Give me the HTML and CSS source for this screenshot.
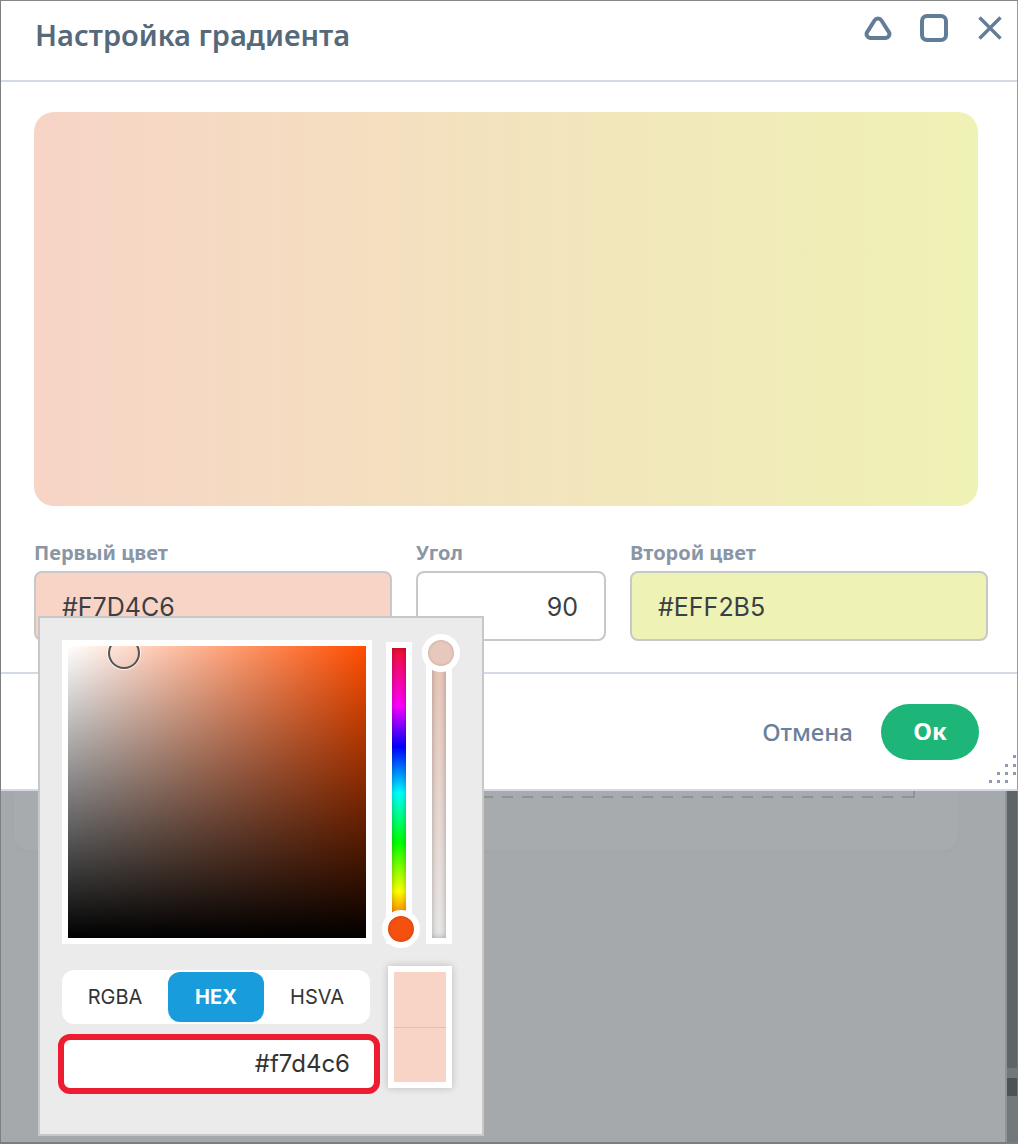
FILE: index.html
```html
<!DOCTYPE html>
<html>
	<head>
		<meta charset="UTF-8">
		<title>Настройка градиента</title>
		<link rel="stylesheet" href="styles.css">
	</head>

	<body>
		<div class="app">
			<div class="dialog">
				<div class="dialogHead">
					<h1 class="dialogTitle">Настройка градиента</h1>
					<div class="winBtns">
						<svg class="iconRoll" viewBox="0 0 28 24"><path d="M10.500 4.500a4.200 4.200 0 0 1 7 0l7 11a4 4 0 0 1-3.400 6.500H6.900a4 4 0 0 1-3.400-6.500z"/></svg>
						<svg class="iconMax" viewBox="0 0 28 28"><rect x="2" y="2" width="24" height="24" rx="5"/></svg>
						<svg class="iconClose" viewBox="0 0 24 24"><path d="M1.500 1.500l21 21M22.500 1.500l-21 21"/></svg>
					</div>
				</div>

				<div class="dialogBody">
					<div class="preview"></div>
					<div class="fields">
						<div class="field fieldColor">
							<label>Первый цвет</label>
							<div class="inputBox first">#F7D4C6</div>
						</div>
						<div class="field fieldAngle">
							<label>Угол</label>
							<div class="inputBox angle">90</div>
						</div>
						<div class="field fieldColor">
							<label>Второй цвет</label>
							<div class="inputBox second">#EFF2B5</div>
						</div>
					</div>
				</div>

				<div class="dialogFoot">
					<a class="cancel">Отмена</a>
					<a class="ok">Ок</a>
				</div>

				<svg class="resize" viewBox="0 0 28 28">
					<rect x="24" y="0" width="3" height="3"/>
					<rect x="16" y="9" width="3" height="3"/>
					<rect x="24" y="9" width="3" height="3"/>
					<rect x="8" y="17" width="3" height="3"/>
					<rect x="16" y="17" width="3" height="3"/>
					<rect x="24" y="17" width="3" height="3"/>
					<rect x="0" y="25" width="3" height="3"/>
					<rect x="8" y="25" width="3" height="3"/>
					<rect x="16" y="25" width="3" height="3"/>
				</svg>
			</div>

			<div class="backdrop">
				<div class="backMain">
					<div class="backCard">
						<div class="dashed"></div>
					</div>
				</div>
				<div class="scroll">
					<div class="scrollThumb"></div>
					<div class="scrollBtn"></div>
				</div>
			</div>

			<div class="picker">
				<div class="pickerTop">
					<div class="satBox">
						<div class="satInner">
							<span class="satDot"></span>
						</div>
					</div>
					<div class="track hue">
						<div class="trackInner"></div>
						<span class="knob"></span>
					</div>
					<div class="track alpha">
						<div class="trackInner"></div>
						<span class="knob"></span>
					</div>
				</div>
				<div class="pickerBottom">
					<div class="modeCol">
						<ul class="modes">
							<li>RGBA</li>
							<li class="current">HEX</li>
							<li>HSVA</li>
						</ul>
						<div class="hexInput">#f7d4c6</div>
					</div>
					<div class="swatch">
						<div></div>
						<div></div>
					</div>
				</div>
			</div>
		</div>
	</body>
</html>
```

FILE: styles.css
```css
*{
	margin: 0;
	padding: 0;
	box-sizing: border-box;
}
ul,li{
	list-style: none;
}
html,body{
	height: 100%;
	overflow: hidden;
}
body{
	font-family: "Noto Sans", Roboto, sans-serif;
	background-color: #a5a9ac;
}

.app{
	position: relative;
	display: flex;
	flex-direction: column;
	width: 1018px;
	height: 1144px;
	border-top: 1px solid #868686;
	border-left: 1px solid #7d8082;
	border-bottom: 2px solid #7b7e80;
	overflow: hidden;
}

/* dialog */
.dialog{
	position: relative;
	flex: none;
	height: 790px;
	background-color: #fff;
	border-right: 1px solid #9a9a9a;
	border-bottom: 2px solid #d3dae5;
}
.dialogHead{
	display: flex;
	justify-content: space-between;
	height: 81px;
	padding: 0 15px 0 34px;
	border-bottom: 2px solid #d3dae5;
}
.dialogTitle{
	margin-top: 14px;
	font-size: 29px;
	line-height: 40px;
	font-weight: 600;
	color: #56697a;
}
.winBtns{
	display: flex;
	align-items: flex-start;
	gap: 28px;
	padding-top: 13px;
}
.winBtns svg{
	display: block;
	fill: none;
	stroke: #627d98;
}
.iconRoll{
	width: 28px;
	height: 24px;
	margin-top: 2px;
	stroke-width: 4;
}
.iconMax{
	width: 28px;
	height: 28px;
	stroke-width: 4;
}
.iconClose{
	width: 24px;
	height: 24px;
	margin-top: 2px;
	margin-left: 2px;
	stroke-width: 3.400;
}

.dialogBody{
	height: 592px;
	padding: 30px 0 0 33px;
	border-bottom: 2px solid #d3dae5;
}
.preview{
	width: 944px;
	height: 394px;
	border-radius: 20px;
	background: linear-gradient(90deg, #f7d4c6, #eff2b5);
}
.fields{
	display: flex;
	gap: 24px;
	margin-top: 34px;
}
.field label{
	display: block;
	height: 31px;
	font-size: 20px;
	line-height: 26px;
	font-weight: 700;
	color: #8a96a5;
}
.fieldColor{
	width: 358px;
}
.fieldAngle{
	width: 190px;
}
.inputBox{
	height: 70px;
	padding: 0 26px;
	font-family: Inter, Roboto, sans-serif;
	font-size: 25px;
	line-height: 68px;
	color: #3a3f47;
	border: 2px solid #c8c8c8;
	border-radius: 8px;
}
.inputBox.first{
	background-color: #f7d4c6;
}
.inputBox.second{
	background-color: #eff2b5;
}
.inputBox.angle{
	text-align: right;
}

.dialogFoot{
	display: flex;
	justify-content: flex-end;
	align-items: center;
	gap: 28px;
	height: 115px;
	padding-right: 38px;
}
.cancel{
	font-size: 24px;
	font-weight: 500;
	color: #6b809a;
}
.ok{
	width: 98px;
	height: 56px;
	font-size: 24px;
	font-weight: 700;
	line-height: 54px;
	text-align: center;
	color: #fff;
	background-color: #1db678;
	border-radius: 28px;
}
.resize{
	position: absolute;
	right: 0;
	bottom: 6px;
	width: 28px;
	height: 28px;
	fill: #8b9bb0;
}

/* grey page under the dialog */
.backdrop{
	flex: 1;
	display: flex;
}
.backMain{
	flex: 1;
	padding-left: 13px;
}
.backCard{
	width: 944px;
	height: 59px;
	padding-left: 30px;
	background-color: #a7abae;
	border-radius: 0 0 14px 14px;
	box-shadow: 0 2px 6px rgba(0,0,0,.02);
}
.dashed{
	width: 871px;
	height: 7px;
	border-right: 2px solid #8e9396;
	background: repeating-linear-gradient(to left, #8e9396 0, #8e9396 11px, transparent 11px, transparent 20px) bottom / 100% 2px no-repeat;
}
.scroll{
	flex: none;
	width: 13px;
	background-color: #73787a;
	border-left: 2px solid #8a949a;
}
.scrollThumb{
	width: 10px;
	height: 277px;
	background-color: #5f6566;
}
.scrollBtn{
	width: 10px;
	height: 18px;
	margin-top: 10px;
	background-color: #4d5355;
}

/* color picker popup */
.picker{
	position: absolute;
	left: 37px;
	top: 615px;
	width: 446px;
	height: 520px;
	padding: 22px;
	background-color: #ebebeb;
	border: 2px solid #c8c8c8;
}
.pickerTop{
	display: flex;
	align-items: flex-start;
	gap: 14px;
}
.satBox{
	width: 310px;
	height: 304px;
	border: 6px solid #fff;
}
.satInner{
	position: relative;
	height: 100%;
	overflow: hidden;
	background:
		linear-gradient(to top, #000, rgba(0,0,0,0)),
		linear-gradient(to right, #fff, rgba(255,255,255,0)),
		#ff4d00;
}
.satDot{
	position: absolute;
	left: 40px;
	top: -9px;
	width: 32px;
	height: 32px;
	border: 2px solid #555;
	border-radius: 50%;
	box-shadow: 0 0 0 1px rgba(255,255,255,.8);
}
.track{
	position: relative;
	width: 26px;
	height: 302px;
	margin-top: 2px;
	border: 6px solid #fff;
}
.trackInner{
	height: 100%;
	box-shadow: inset 0 0 6px rgba(0,0,0,.3);
}
.hue .trackInner{
	background: linear-gradient(to bottom, #f01030, #f0f 20%, #00f 34%, #0ff 50%, #0f0 67%, #ff0 84%, #f00);
}
.alpha .trackInner{
	background: linear-gradient(to bottom, #e9c4b6, #e8e8e8);
}
.knob{
	position: absolute;
	left: 50%;
	width: 38px;
	height: 38px;
	margin-left: -17px;
	border: 6px solid #fff;
	border-radius: 50%;
}
.hue .knob{
	bottom: -10px;
	background-color: #f4500f;
	box-shadow: inset 0 0 3px rgba(0,0,0,.2);
}
.alpha .knob{
	top: -14px;
	background-color: #e6c8bc;
	box-shadow: inset 0 0 3px rgba(0,0,0,.2);
}

.pickerBottom{
	display: flex;
	gap: 8px;
	margin-top: 22px;
	margin-left: -4px;
}
.modeCol{
	width: 322px;
	padding-top: 4px;
}
.modes{
	display: flex;
	width: 308px;
	height: 54px;
	margin-left: 4px;
	background-color: #fff;
	border-radius: 12px;
}
.modes li{
	width: 106px;
	font-family: Inter, Roboto, sans-serif;
	font-size: 20px;
	line-height: 54px;
	text-align: center;
	color: #333;
}
.modes li.current{
	width: 96px;
	height: 50px;
	margin-top: 2px;
	font-weight: 700;
	line-height: 50px;
	color: #fff;
	background-color: #189cdb;
	border-radius: 12px;
	box-shadow: 0 0 0 2px #fff;
}
.hexInput{
	height: 60px;
	margin-top: 10px;
	padding-right: 24px;
	font-family: Inter, Roboto, sans-serif;
	font-size: 24px;
	line-height: 48px;
	text-align: right;
	color: #333;
	background-color: #fff;
	border: 6px solid #ee1c30;
	border-radius: 12px;
}
.swatch{
	width: 64px;
	height: 122px;
	border: 6px solid #fff;
	box-shadow: 0 0 8px rgba(0,0,0,.2);
}
.swatch div{
	height: 55px;
	background-color: #f7d4c6;
}
.swatch div:last-child{
	border-top: 1px solid #c8c8c8;
}
```
